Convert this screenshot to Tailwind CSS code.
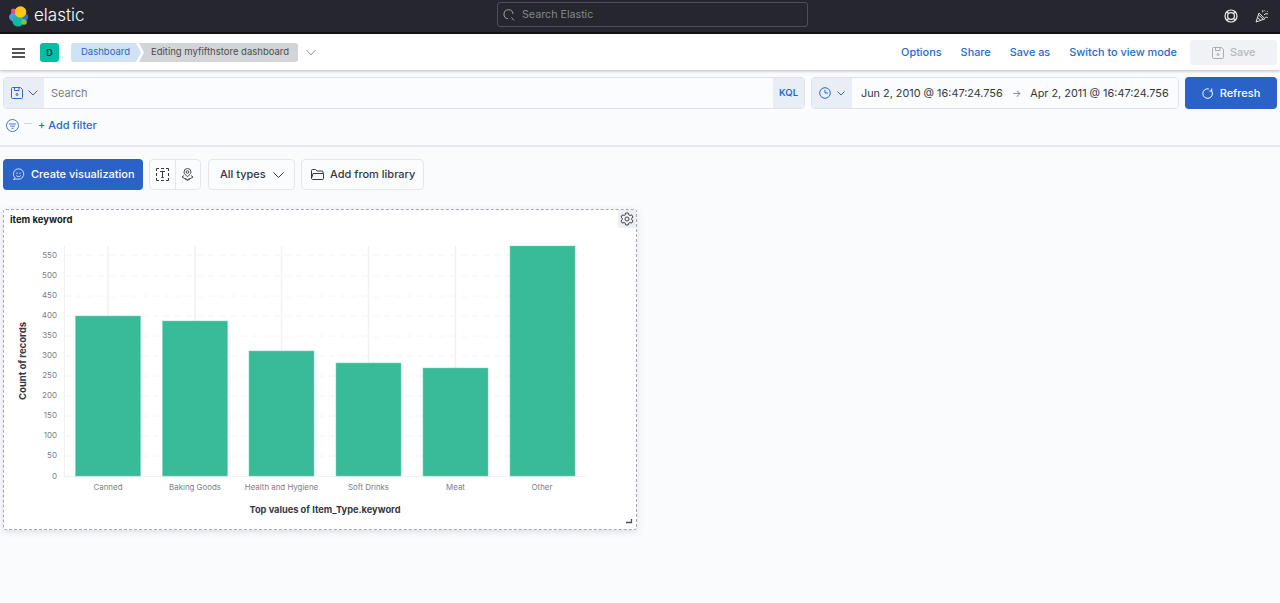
<!DOCTYPE html>
<html lang="en">
<head>
  <meta charset="UTF-8" />
  <meta name="viewport" content="width=device-width, initial-scale=1.0"/>
  <title>Editing myfifthstore dashboard - Elastic</title>
  <script src="https://cdn.jsdelivr.net/npm/@tailwindcss/browser@4"></script>
</head>
<body class="h-[603px] overflow-hidden bg-[#fafbfd] font-['Inter','Noto_Sans',sans-serif] text-[#343741] whitespace-nowrap">

  <!-- DARK HEADER -->
  <header class="relative h-[34px] bg-[#25262e] border-b-2 border-b-[#111] flex items-center justify-between pl-[9px] pr-[11px]">
    <div class="flex items-center gap-[5px] w-[300px]">
      <svg class="w-[20px] h-[21px]" viewBox="0 0 20 21">
        <circle cx="4.500" cy="11" r="4.400" fill="#4a9fe0"/>
        <circle cx="4.500" cy="5" r="2.600" fill="#e8478b"/>
        <circle cx="16" cy="11" r="3.200" fill="#2f6fd0"/>
        <circle cx="9" cy="15" r="5.600" fill="#14b8a6"/>
        <circle cx="15" cy="16" r="2.800" fill="#7dc443"/>
        <circle cx="11.500" cy="6" r="5.800" fill="#fec514"/>
      </svg>
      <span class="text-[17px] leading-none text-white font-light -mt-[2px]">elastic</span>
    </div>
    <div class="absolute left-[497px] top-[2px] w-[311px] h-[25px] pt-[1px] rounded-[3px] border border-[#4e4f57] bg-[#25262e] flex items-center pl-[5px] gap-[7px]">
      <svg class="w-[12px] h-[12px]" viewBox="0 0 12 12" fill="none" stroke="#a0a2a8" stroke-width="1"><path d="M8.5 8.5 11 11.5M10 5A4.5 4.5 0 1 0 5 9.7"/></svg>
      <span class="text-[10.7px] text-[#84868d]">Search Elastic</span>
    </div>
    <div class="flex items-center gap-[17px]">
      <svg class="w-[14px] h-[14px]" viewBox="0 0 14 14" fill="none" stroke="#f0f0f2" stroke-width="1.2"><circle cx="7" cy="7" r="6"/><circle cx="7" cy="7" r="3.4"/><path d="M2.8 2.8 4.6 4.6M11.2 2.8 9.4 4.6M2.8 11.2 4.6 9.4M11.2 11.2 9.4 9.4"/></svg>
      <svg class="w-[14px] h-[14px]" viewBox="0 0 14 14" fill="none" stroke="#e8e8ea" stroke-width="1"><path d="M4 4 1 13l9-3.2ZM2.6 8.5l3.2 3M3.6 6l4.7 4.4M7 3.5c1-.5 1-1.500.6-2.500M9 6c1.300-1.500 2.500-1.500 4-1M10 8.500c1-.5 2-.3 3 .3M9.500 1.500l.8.8M12 2l.6.6"/></svg>
    </div>
  </header>

  <!-- APP BAR -->
  <div class="h-[36px] pt-[1px] bg-white shadow-[0_1px_3px_rgba(60,66,90,0.35)] relative flex items-center pl-[12px] pr-[3px]">
    <svg class="w-[13px] h-[10px]" viewBox="0 0 13 10" fill="none" stroke="#1a1c21" stroke-width="1.400"><path d="M0 1h13M0 5h13M0 9h13"/></svg>
    <div class="ml-[15px] w-[19px] h-[19px] rounded-[3px] bg-[#00bfa5] flex items-center justify-center text-[9px] font-semibold text-[#1a1c21]">D</div>
    <div class="ml-[12px] flex items-center h-[19px] text-[9.5px]">
      <div class="h-full pl-[10px] pr-[11px] bg-[#cfe3f5] rounded-l-[3px] text-[#2a66c4] flex items-center [clip-path:polygon(0_0,calc(100%-5px)_0,100%_50%,calc(100%-5px)_100%,0_100%)]">Dashboard</div>
      <div class="-ml-[2px] h-full pl-[12px] pr-[9px] bg-[#d3d4d8] rounded-r-[3px] text-[#4a4c54] flex items-center [clip-path:polygon(0_0,100%_0,100%_100%,0_100%,5px_50%)]">Editing myfifthstore dashboard</div>
    </div>
    <svg class="ml-[8px] w-[10px] h-[7px]" viewBox="0 0 10 7" fill="none" stroke="#8a8c94" stroke-width="0.900"><path d="M.5 1 5 6 9.500 1"/></svg>
    <div class="ml-auto flex items-center text-[10.9px] text-[#2a6bc9] font-medium">
      <span>Options</span>
      <span class="ml-[19px]">Share</span>
      <span class="ml-[19px]">Save as</span>
      <span class="ml-[19px]">Switch to view mode</span>
      <div class="ml-[13px] w-[87px] h-[25px] rounded-[3px] bg-[#f0f2f5] flex items-center pl-[22px] gap-[6px] text-[#b4b8c2]">
        <svg class="w-[12px] h-[12px]" viewBox="0 0 12 12" fill="none" stroke="#a9adb8" stroke-width="1"><path d="M.5 1.500a1 1 0 0 1 1-1h8l2 2v8a1 1 0 0 1-1 1h-9a1 1 0 0 1-1-1ZM3.500.5v3h4.500v-3"/><circle cx="6" cy="7.500" r="1"/></svg>
        <span>Save</span>
      </div>
    </div>
  </div>

  <!-- QUERY BAR -->
  <div class="border-b-2 border-b-[#e6e8f0] h-[77px] pt-[7px]">
    <div class="flex pl-[3px] pr-[3px] h-[32px]">
      <div class="w-[802px] h-full flex rounded-[4px] border border-[#dfe2ee] overflow-hidden">
        <div class="w-[40px] bg-[#e9edf6] flex items-center pl-[7px] gap-[5px]">
          <svg class="w-[12px] h-[12px]" viewBox="0 0 12 12" fill="none" stroke="#2a6bc9" stroke-width="1"><path d="M.5 1.500a1 1 0 0 1 1-1h8l2 2v8a1 1 0 0 1-1 1h-9a1 1 0 0 1-1-1ZM3.500.5v3h4.500v-3"/><circle cx="6" cy="7.500" r="1"/></svg>
          <svg class="w-[10px] h-[6px]" viewBox="0 0 10 6" fill="none" stroke="#2a6bc9" stroke-width="1"><path d="M.5.5 5 5 9.500.5"/></svg>
        </div>
        <div class="flex-1 bg-[#fbfcfe] flex items-center pl-[7px] text-[11px] text-[#7b7e87]">Search</div>
        <div class="w-[31px] bg-[#e9edf6] flex items-center justify-center text-[9.500px] font-semibold text-[#2a6bc9]">KQL</div>
      </div>
      <div class="ml-[6px] w-[368px] h-full flex rounded-[4px] border border-[#dfe2ee] overflow-hidden">
        <div class="w-[40px] shrink-0 bg-[#e9edf6] flex items-center pl-[7px] gap-[6px]">
          <svg class="w-[12px] h-[12px]" viewBox="0 0 12 12" fill="none" stroke="#2a6bc9" stroke-width="1"><circle cx="6" cy="6" r="5.300"/><path d="M6 2.800V6h3"/></svg>
          <svg class="w-[8px] h-[5px]" viewBox="0 0 8 5" fill="none" stroke="#2a6bc9" stroke-width="1"><path d="M.5.5 4 4 7.500.5"/></svg>
        </div>
        <div class="flex-1 bg-[#fbfcfe] flex items-center pl-[9px] text-[10.85px] text-[#343741]">
          <span>Jun 2, 2010 @ 16:47:24.756</span>
          <span class="ml-[9px] text-[#7b7e87] text-[10px]">→</span>
          <span class="ml-[9px]">Apr 2, 2011 @ 16:47:24.756</span>
        </div>
      </div>
      <div class="ml-[6px] w-[92px] h-full rounded-[4px] bg-[#2a62c8] text-white text-[11px] font-medium flex items-center justify-center gap-[7px]">
        <svg class="w-[11px] h-[11px]" viewBox="0 0 11 11" fill="none" stroke="#fff" stroke-width="1"><path d="M9.700 3A4.800 4.800 0 1 1 6.800.9M9.700.6V3H7.300"/></svg>
        <span>Refresh</span>
      </div>
    </div>
    <div class="flex items-center pl-[6px] mt-[9px] h-[14px]">
      <svg class="w-[13px] h-[13px]" viewBox="0 0 13 13" fill="none" stroke="#2a6bc9" stroke-width="0.900"><circle cx="6.500" cy="6.500" r="6"/><path d="M3 5h7M4.300 7.200h4.400M5.500 9.300h2"/></svg>
      <div class="ml-[5px] w-[8px] h-px bg-[#d3d6de] -mt-[3px]"></div>
      <span class="ml-[6px] text-[11px] font-medium text-[#2a6bc9]">+ Add filter</span>
    </div>
  </div>

  <!-- TOOLBAR -->
  <div class="flex items-center pl-[3px] mt-[12px] h-[31px] text-[11px]">
    <div class="w-[140px] h-full rounded-[4px] bg-[#2a62c8] text-white font-medium flex items-center pl-[9px] gap-[6px]">
      <svg class="w-[13px] h-[13px]" viewBox="0 0 13 13" fill="none" stroke="#fff" stroke-width="0.800"><path d="M1.500 11.500 3 9.800A5.200 5.200 0 1 1 6 11.200a5 5 0 0 1-2-.3ZM5 4.500v1.500M8 4.500v1.500M4.200 7.500c1.200 1.500 3.400 1.500 4.600 0"/></svg>
      <span>Create visualization</span>
    </div>
    <div class="ml-[6px] w-[52px] h-full rounded-[4px] border border-[#e3e6ef] flex bg-[#fbfcfe]">
      <div class="w-[26px] flex items-center justify-center border-r border-r-[#e3e6ef]">
        <svg class="w-[13px] h-[13px]" viewBox="0 0 13 13" fill="none" stroke="#343741" stroke-width="1"><path d="M.5 3V.5H3M5 .5h3M10 .5h2.500V3M.5 5v3M12.500 5v3M.5 10v2.500H3M5 12.500h3M10 12.500h2.500V10M4 3.500h5M6.500 3.500v6M5.300 9.500h2.400" /></svg>
      </div>
      <div class="w-[25px] flex items-center justify-center">
        <svg class="w-[13px] h-[13px]" viewBox="0 0 13 13" fill="none" stroke="#343741" stroke-width="0.900"><path d="M6.500 8.500C4.500 7 3 5.800 3 4a3.500 3.500 0 0 1 7 0c0 1.800-1.500 3-3.500 4.500Z"/><circle cx="6.500" cy="4" r="1.300"/><path d="M3 7.500 1 9l2.500 1.500L6.500 12.500 9.500 10.500 12 9l-2-1.500M3.500 10.500l3 1 3-1"/></svg>
      </div>
    </div>
    <div class="ml-[7px] w-[87px] h-full rounded-[4px] border border-[#e3e6ef] bg-[#fbfcfe] flex items-center pl-[11px] gap-[7px] font-medium">
      <span>All types</span>
      <svg class="w-[11px] h-[6px]" viewBox="0 0 11 6" fill="none" stroke="#343741" stroke-width="1"><path d="M.5.5 5.500 5.500 10.500.5"/></svg>
    </div>
    <div class="ml-[6px] w-[123px] h-full rounded-[4px] border border-[#e3e6ef] bg-[#fbfcfe] flex items-center pl-[9px] gap-[6px] font-medium">
      <svg class="w-[13px] h-[11px]" viewBox="0 0 13 11" fill="none" stroke="#343741" stroke-width="1"><path d="M.5 9.500V1.500a1 1 0 0 1 1-1h3l1.500 1.500h5a1 1 0 0 1 1 1v1M.5 9.500 2 4.500h10.500V9.500a1 1 0 0 1-1 1h-10Z"/></svg>
      <span>Add from library</span>
    </div>
  </div>

  <!-- PANEL -->
  <div class="relative ml-[3px] mt-[19px] w-[634px] h-[321px] bg-white rounded-[3px] border border-dashed border-[#a5a8b3] shadow-[0_2px_6px_rgba(60,66,90,0.15)]">
    <div class="pl-[6px] pt-[4px] text-[9.5px] leading-[11px] font-bold text-[#1a1c21]">item keyword</div>
    <div class="absolute right-0 top-0 w-[18px] h-[18px] rounded-bl-[3px] bg-[#eceef1] flex items-center justify-center">
      <svg class="w-[14px] h-[14px]" viewBox="0 0 14 14" fill="none" stroke="#343741" stroke-width="0.900"><path d="M5.700 1h2.600l.4 1.800 1.300.7 1.700-.6 1.300 2.200-1.300 1.200v1.400l1.300 1.200-1.300 2.200-1.700-.6-1.300.7L8.300 13H5.700l-.4-1.800-1.300-.7-1.700.6L1 8.900l1.300-1.200V6.300L1 5.100l1.300-2.200 1.700.6 1.300-.7Z"/><circle cx="7" cy="7" r="2"/></svg>
    </div>

    <!-- chart: viewBox uses page coordinates -->
    <svg class="absolute -left-px -top-px" width="634" height="321" viewBox="3 209 634 321" font-family="Inter, sans-serif">
      <g stroke="#f3f4f7" stroke-width="1" stroke-dasharray="6 5">
        <path d="M65 456H585M65 436H585M65 416H585M65 396H585M65 376H585M65 356H585M65 336H585M65 316H585M65 296H585M65 276H585M65 255H585"/>
      </g>
      <g stroke="#f0f1f5" stroke-width="1.500">
        <path d="M108 246V476M195 246V476M281.500 246V476M368.500 246V476M455.500 246V476"/>
      </g>
      <path d="M64.500 246V476.500H586" stroke="#f0f1f5" fill="none"/>
      <g fill="#3abb98" stroke="#6fd0b5" stroke-width="0.500">
        <rect x="75.500" y="316" width="65" height="160"/>
        <rect x="162.500" y="321" width="65" height="155"/>
        <rect x="249" y="351" width="65" height="125"/>
        <rect x="336" y="363" width="65" height="113"/>
        <rect x="423" y="368" width="65" height="108"/>
        <rect x="510" y="246" width="65" height="230"/>
      </g>
      <g fill="#7b7e87" font-size="8" text-anchor="end">
        <text x="57" y="258">550</text><text x="57" y="278">500</text><text x="57" y="298">450</text>
        <text x="57" y="318">400</text><text x="57" y="338">350</text><text x="57" y="358">300</text>
        <text x="57" y="378">250</text><text x="57" y="398">200</text><text x="57" y="418">150</text>
        <text x="57" y="438">100</text><text x="57" y="458">50</text><text x="57" y="478.500">0</text>
      </g>
      <g fill="#7b7e87" font-size="7.900" text-anchor="middle">
        <text x="108" y="490">Canned</text>
        <text x="195" y="490">Baking Goods</text>
        <text x="281.500" y="490">Health and Hygiene</text>
        <text x="368.500" y="490">Soft Drinks</text>
        <text x="455.500" y="490">Meat</text>
        <text x="542" y="490">Other</text>
      </g>
      <text x="325" y="513" fill="#343741" font-size="9.250" font-weight="700" text-anchor="middle">Top values of Item_Type.keyword</text>
      <text transform="translate(26 361) rotate(-90)" fill="#343741" font-size="9.500" font-weight="700" text-anchor="middle">Count of records</text>
      <path d="M631.500 519V522.500H626" fill="none" stroke="#4a4c54" stroke-width="1.300"/>
    </svg>
  </div>
</body>
</html>
